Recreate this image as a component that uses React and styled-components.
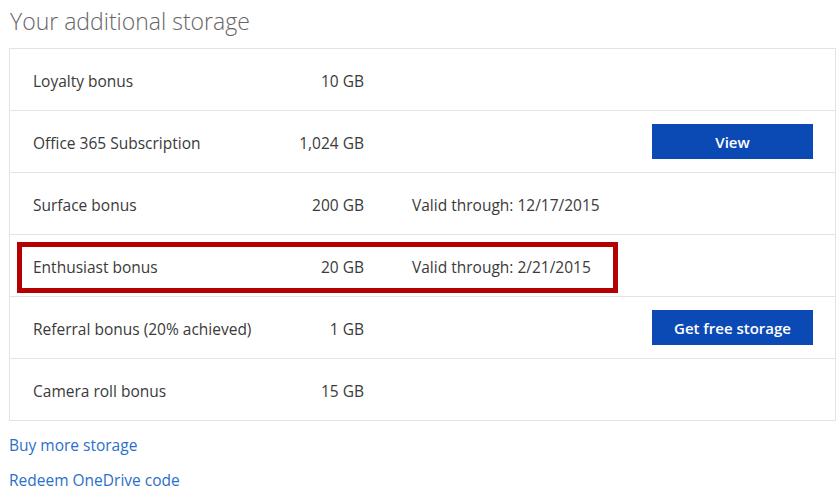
import React from "react";
import styled, { createGlobalStyle } from "styled-components";

const Global = createGlobalStyle`
  html, body { margin: 0; padding: 0; background: #fff; }
  body { font-family: "Open Sans", "Noto Sans", sans-serif; color: #333; }
`;

const Page = styled.div`
  padding: 0 4px 0 9px;
  width: 840px;
  box-sizing: border-box;
`;

const Title = styled.h1`
  margin: 0;
  height: 48px;
  line-height: 42px;
  font-size: 23px;
  font-weight: 300;
  color: #666;
  padding-left: 1px;
`;

const Table = styled.div`
  border: 1px solid #e3e3e3;
  border-bottom: none;
  width: 827px;
  box-sizing: border-box;
`;

const Row = styled.div`
  position: relative;
  display: flex;
  align-items: center;
  height: 62px;
  box-sizing: border-box;
  border-bottom: 1px solid #e3e3e3;
  padding: 2px 22px 0 23px;
  font-size: 15.5px;
  color: #3a3a3a;
`;

const Label = styled.div`
  width: 240px;
`;

const Size = styled.div`
  width: 91px;
  text-align: right;
`;

const Valid = styled.div`
  flex: 1;
  padding-left: 48px;
`;

const Button = styled.button`
  width: 161px;
  height: 35px;
  margin-top: -2px;
  border: none;
  background: #0b4ab5;
  color: #fff;
  font-family: "Open Sans", "Noto Sans", sans-serif;
  font-size: 15px;
  font-weight: 600;
  cursor: pointer;
`;

const Highlight = styled.div`
  position: absolute;
  left: 7px;
  top: 7px;
  width: 601px;
  height: 51px;
  border: 5px solid #b40000;
  box-sizing: border-box;
  pointer-events: none;
`;

const Links = styled.div`
  display: flex;
  flex-direction: column;
  padding-top: 14px;
  gap: 15px;
`;

const Link = styled.a`
  font-size: 15.5px;
  color: #2b6fca;
  text-decoration: none;
  line-height: 20px;
`;

const rows = [
  { label: "Loyalty bonus", size: "10 GB" },
  { label: "Office 365 Subscription", size: "1,024 GB", button: "View" },
  { label: "Surface bonus", size: "200 GB", valid: "Valid through: 12/17/2015" },
  { label: "Enthusiast bonus", size: "20 GB", valid: "Valid through: 2/21/2015", highlight: true },
  { label: "Referral bonus (20% achieved)", size: "1 GB", button: "Get free storage" },
  { label: "Camera roll bonus", size: "15 GB" },
];

export default function App() {
  return (
    <Page>
      <Global />
      <Title>Your additional storage</Title>
      <Table>
        {rows.map((r) => (
          <Row key={r.label}>
            <Label>{r.label}</Label>
            <Size>{r.size}</Size>
            <Valid>{r.valid}</Valid>
            {r.button && <Button>{r.button}</Button>}
            {r.highlight && <Highlight />}
          </Row>
        ))}
      </Table>
      <Links>
        <Link href="#">Buy more storage</Link>
        <Link href="#">Redeem OneDrive code</Link>
      </Links>
    </Page>
  );
}
